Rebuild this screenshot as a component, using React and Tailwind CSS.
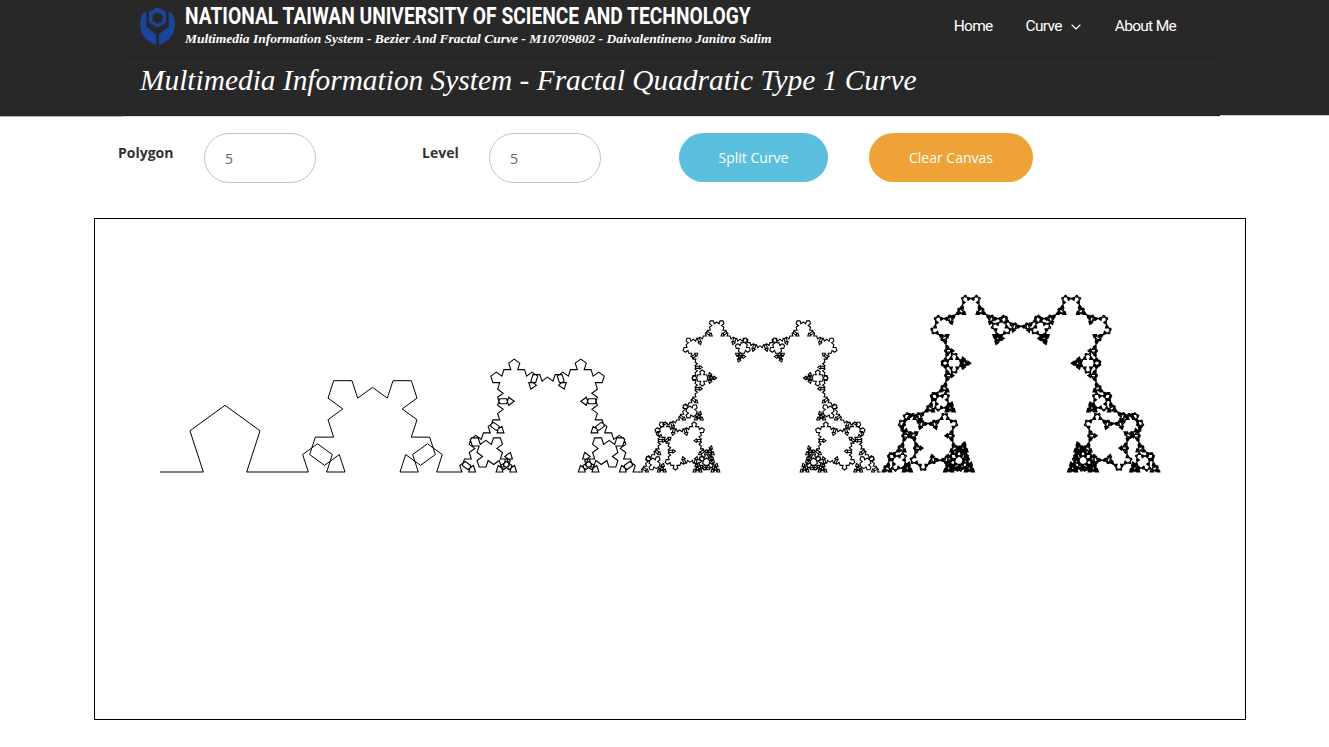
import React, { useMemo } from "react";
import { ChevronDown } from "lucide-react";

const BASE_Y = 253;

// one curve from (x, BASE_Y) of the given width, every side gets a polygon in its middle third
const buildCurve = ({ x, width, level, stretch }, sides) => {
  const out = [];
  const turn = (2 * Math.PI) / sides;
  const walk = (ax, ay, bx, by, depth) => {
    if (depth === 0) {
      const y = BASE_Y + (by - BASE_Y) * stretch;
      out.push(`L${bx.toFixed(2)} ${y.toFixed(2)}`);
      return;
    }
    const dx = (bx - ax) / 3;
    const dy = (by - ay) / 3;
    const len = Math.hypot(dx, dy);
    let angle = Math.atan2(dy, dx) - (Math.PI - turn);
    let px = ax + dx;
    let py = ay + dy;
    walk(ax, ay, px, py, depth - 1);
    for (let i = 0; i < sides - 1; i++) {
      const nx = px + Math.cos(angle) * len;
      const ny = py + Math.sin(angle) * len;
      walk(px, py, nx, ny, depth - 1);
      px = nx;
      py = ny;
      angle += turn;
    }
    walk(px, py, bx, by, depth - 1);
  };
  walk(x, BASE_Y, x + width, BASE_Y, level);
  return `M${x} ${BASE_Y}` + out.join("");
};

const curves = [
  { x: 65, width: 130, level: 1, stretch: 1, line: 1 },
  { x: 195, width: 165, level: 2, stretch: 1, line: 1 },
  { x: 360, width: 185, level: 3, stretch: 1, line: 1.1 },
  { x: 544.5, width: 241, level: 4, stretch: 1.02, line: 1.1 },
  { x: 786.5, width: 279, level: 5, stretch: 1.02, line: 1.15 },
];

const Logo = () => (
  <svg width="50" height="50" viewBox="0 0 50 50" className="shrink-0 ml-[12px] mt-[2px]">
    <path d="M9 10C3 17 4 32 12 38C16 41 19 42.5 22.5 43C26 42.5 29 41 33 38C41 32 42 17 36 10Z" fill="#17469b" />
    <path d="M12.5 6V24L22.5 32L32.5 24V6Z" fill="#282828" />
    <path d="M12.5 6V24L22.5 32L32.5 24V6" fill="none" stroke="#282828" strokeWidth="2.5" />
    <path d="M22.5 32V45" stroke="#282828" strokeWidth="2.5" />
    <path d="M8 2H37V8H8Z" fill="#282828" />
    <path d="M22.5 5L31 10V20.5L22.5 25.5L14 20.5V10Z" fill="#17469b" />
    <path d="M22.5 10L27.5 13V19L22.5 22L17.5 19V13Z" fill="#282828" />
  </svg>
);

const Header = () => (
  <header className="bg-[#282828]">
    <div className="ml-[123px] w-[1097px] h-[115px] flex flex-col">
      <div className="h-[63px] flex border-b border-[#303030]">
        <Logo />
        <div className="w-[620px]">
          <h1 className="font-['Roboto',sans-serif] font-bold text-white text-[24px] leading-[30px] mt-[1px] whitespace-nowrap origin-left scale-x-[0.8]">
            NATIONAL TAIWAN UNIVERSITY OF SCIENCE AND TECHNOLOGY
          </h1>
          <p className="font-['Liberation_Serif',serif] italic font-bold text-white text-[13.5px] leading-[15px] whitespace-nowrap">
            Multimedia Information System - Bezier And Fractal Curve - M10709802 - Daivalentineno Janitra Salim
          </p>
        </div>
        <nav className="ml-auto mr-[44px] h-[54px] flex items-center font-['Roboto',sans-serif] text-white text-[15.5px] tracking-[-0.7px]">
          <a>Home</a>
          <a className="ml-[33px] flex items-center">
            Curve <ChevronDown size={16} strokeWidth={1.75} className="ml-[6px]" />
          </a>
          <a className="ml-[31px]">About Me</a>
        </nav>
      </div>
      <h2 className="ml-[17px] font-['Liberation_Serif',serif] italic text-white text-[29.4px] leading-[34px] whitespace-nowrap">
        Multimedia Information System - Fractal Quadratic Type 1 Curve
      </h2>
    </div>
    <div className="flex h-px">
      <div className="w-[123px]" />
      <div className="w-[1097px] bg-[#1c1c1c]" />
      <div className="flex-1 bg-[#c8c8c8]" />
    </div>
  </header>
);

const Field = ({ label, labelWidth, className }) => (
  <div className={`flex ${className}`}>
    <label
      style={{ width: labelWidth }}
      className="mt-[10px] text-[14px] leading-[20px] font-bold text-[#333]"
    >
      {label}
    </label>
    <input
      type="text"
      defaultValue="5"
      className="w-[112px] h-[50px] rounded-full border border-[#c4c4c4] pl-[20px] text-[14px] text-[#666] outline-none"
    />
  </div>
);

export default function App() {
  const paths = useMemo(() => curves.map((c) => buildCurve(c, 5)), []);

  return (
    <div className="min-h-[747px] bg-white font-['Open_Sans',sans-serif] overflow-hidden">
      <Header />
      <div className="flex h-px">
        <div className="w-[123px] bg-[#b0b0b0]" />
        <div className="w-[1097px] bg-[#e4e4e4]" />
      </div>
      <div className="flex h-[101px] pt-[16px]">
        <Field label="Polygon" labelWidth={86} className="ml-[118px]" />
        <Field label="Level" labelWidth={67} className="ml-[106px]" />
        <button className="ml-[78px] w-[149px] h-[49px] rounded-full bg-[#5bc0de] text-white text-[14px]">
          Split Curve
        </button>
        <button className="ml-[41px] w-[164px] h-[49px] rounded-full bg-[#efa236] text-white text-[14px]">
          Clear Canvas
        </button>
      </div>
      <div className="ml-[94px] w-[1152px] h-[502px] border border-black">
        <svg width="1150" height="500" className="block">
          {paths.map((d, i) => (
            <path key={i} d={d} fill="none" stroke="#000" strokeWidth={curves[i].line} />
          ))}
        </svg>
      </div>
    </div>
  );
}
